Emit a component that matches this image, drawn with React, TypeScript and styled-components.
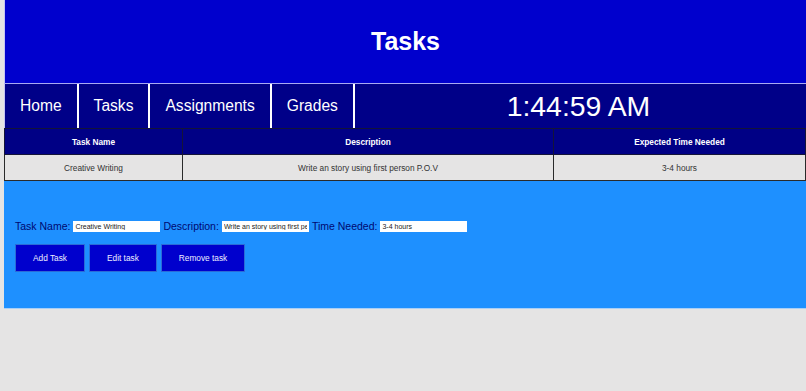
import React from "react";
import styled, { createGlobalStyle } from "styled-components";

const Global = createGlobalStyle`
  html, body {
    margin: 0;
    padding: 0;
    background: #e5e4e4;
    font-family: "Liberation Sans", Arial, sans-serif;
    overflow: hidden;
  }
`;

const Page = styled.div`
  margin-left: 4px;
  width: 802px;
`;

const Header = styled.header`
  height: 83px;
  background: #0000cd;
  border-left: 1px solid #c4c4f2;
  border-bottom: 1px solid #a9a9f2;
  display: flex;
  align-items: center;
  justify-content: center;
`;

const Title = styled.h1`
  margin: 0;
  color: #ffffff;
  font-size: 25px;
  font-weight: bold;
`;

const Nav = styled.nav`
  height: 44px;
  background: #000088;
  border-left: 1px solid #c4c4f2;
  display: flex;
  align-items: stretch;
`;

const NavItem = styled.a`
  display: flex;
  align-items: center;
  padding: 0 15px;
  color: #ffffff;
  font-size: 15.6px;
  text-decoration: none;
  border-right: 2px solid #ffffff;
`;

const Clock = styled.div`
  flex: 1;
  display: flex;
  align-items: center;
  justify-content: center;
  color: #ffffff;
  font-size: 28.4px;
  padding-right: 4px;
`;

const Table = styled.table`
  width: 802px;
  border-collapse: collapse;
  table-layout: fixed;
`;

const Th = styled.th`
  height: 25px;
  background: #000085;
  color: #ffffff;
  font-size: 8.3px;
  font-weight: bold;
  border: 1px solid #141438;
  padding: 0;
`;

const Td = styled.td`
  height: 25px;
  background: #e5e4e4;
  color: #333333;
  font-size: 8.3px;
  text-align: center;
  border: 1px solid #2a2a2a;
  padding: 0;
`;

const FormSection = styled.section`
  background: #1e90ff;
  border-bottom: 1px solid #a9cff7;
  padding: 38px 11px 36px 11px;
  display: flex;
  flex-direction: column;
  gap: 11px;
`;

const FieldRow = styled.div`
  display: flex;
  align-items: center;
  height: 14px;
`;

const Label = styled.label`
  font-size: 10.5px;
  color: #000870;
`;

const Input = styled.input`
  width: 87px;
  height: 11px;
  box-sizing: border-box;
  border: none;
  margin: 0 3px;
  padding: 0 2px;
  font-family: "Liberation Sans", Arial, sans-serif;
  font-size: 7px;
  color: #222;
  background: #ffffff;
  outline: none;
`;

const ButtonRow = styled.div`
  display: flex;
  gap: 4px;
`;

const Button = styled.button`
  height: 28px;
  padding: 0 17px;
  background: #0000cd;
  border: 1px solid #2b6bd6;
  color: #eeeeff;
  font-family: "Liberation Sans", Arial, sans-serif;
  font-size: 8.3px;
  cursor: pointer;
`;

export default function App() {
  return (
    <>
      <Global />
      <Page>
        <Header>
          <Title>Tasks</Title>
        </Header>
        <Nav>
          <NavItem>Home</NavItem>
          <NavItem>Tasks</NavItem>
          <NavItem>Assignments</NavItem>
          <NavItem>Grades</NavItem>
          <Clock>1:44:59 AM</Clock>
        </Nav>
        <Table>
          <colgroup>
            <col style={{ width: 178 }} />
            <col style={{ width: 371 }} />
            <col />
          </colgroup>
          <thead>
            <tr>
              <Th>Task Name</Th>
              <Th>Description</Th>
              <Th>Expected Time Needed</Th>
            </tr>
          </thead>
          <tbody>
            <tr>
              <Td>Creative Writing</Td>
              <Td>Write an story using first person P.O.V</Td>
              <Td>3-4 hours</Td>
            </tr>
          </tbody>
        </Table>
        <FormSection>
          <FieldRow>
            <Label>Task Name:</Label>
            <Input defaultValue="Creative Writing" />
            <Label>Description:</Label>
            <Input defaultValue="Write an story using first person P.O.V" />
            <Label>Time Needed:</Label>
            <Input defaultValue="3-4 hours" />
          </FieldRow>
          <ButtonRow>
            <Button>Add Task</Button>
            <Button>Edit task</Button>
            <Button>Remove task</Button>
          </ButtonRow>
        </FormSection>
      </Page>
    </>
  );
}
